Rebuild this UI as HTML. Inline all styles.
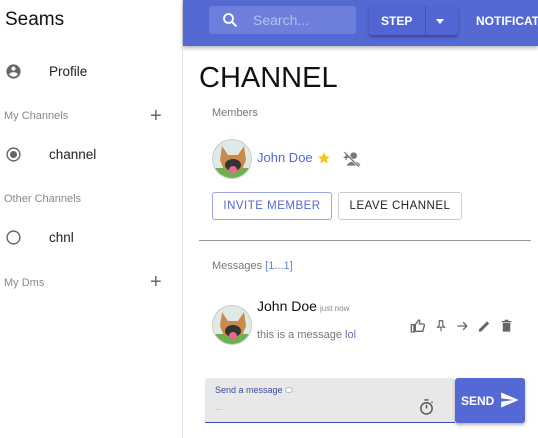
<!DOCTYPE html>
<html><head><style>
*{margin:0;padding:0;box-sizing:border-box}
body{width:538px;height:438px;overflow:hidden;font-family:"Liberation Sans",Arial,sans-serif;background:#fff;position:relative;color:#222}
.a{position:absolute}
.side{left:0;top:0;width:183px;height:438px;border-right:1px solid #e2e2e2}
.sub{font-size:11px;color:#888}
.it{font-size:13.5px;color:#222}
.hdr{left:183px;top:0;width:355px;height:46px;background:#5569d5;box-shadow:0 2px 4px rgba(0,0,0,.3)}
.av{width:40px;height:40px;border-radius:50%;overflow:hidden;border:1px solid #ccc;background:#dfe9e6}
.btn{height:28px;border:1px solid #ccc;border-radius:3px;font-size:11.5px;letter-spacing:.5px;display:flex;align-items:center;justify-content:center}
</style></head><body>
<div class="a side">
 <div class="a" style="left:5px;top:9px;font-size:19px;color:#111">Seams</div>
 <svg class="a" style="left:5px;top:63px" width="17" height="17" viewBox="0 0 24 24"><path fill="#666" d="M12 2a10 10 0 100 20 10 10 0 000-20zm0 3a3 3 0 110 6 3 3 0 010-6zm0 14.2a7.2 7.2 0 01-6-3.2c0-2 4-3.1 6-3.1s6 1.1 6 3.1a7.2 7.2 0 01-6 3.2z"/></svg>
 <div class="a it" style="left:49px;top:64px">Profile</div>
 <div class="a sub" style="left:4px;top:110px">My Channels</div>
 <div class="a" style="left:150px;top:105px;font-size:20px;color:#666;font-weight:300">+</div>
 <svg class="a" style="left:5px;top:146px" width="17" height="17" viewBox="0 0 24 24"><circle cx="12" cy="12" r="9" fill="none" stroke="#666" stroke-width="2"/><circle cx="12" cy="12" r="5" fill="#666"/></svg>
 <div class="a it" style="left:49px;top:147px">channel</div>
 <div class="a sub" style="left:4px;top:193px">Other Channels</div>
 <svg class="a" style="left:5px;top:229px" width="17" height="17" viewBox="0 0 24 24"><circle cx="12" cy="12" r="9" fill="none" stroke="#666" stroke-width="2"/></svg>
 <div class="a it" style="left:49px;top:230px">chnl</div>
 <div class="a sub" style="left:4px;top:277px">My Dms</div>
 <div class="a" style="left:150px;top:271px;font-size:20px;color:#666;font-weight:300">+</div>
</div>
<div class="a hdr">
 <div class="a" style="left:26px;top:6px;width:147px;height:28px;background:rgba(255,255,255,.15);border-radius:3px"></div>
 <svg class="a" style="left:38px;top:11px" width="18" height="18" viewBox="0 0 24 24"><circle cx="10" cy="10" r="6" fill="none" stroke="#fff" stroke-width="2.4"/><path d="M14.5 14.5l6 6" stroke="#fff" stroke-width="2.6"/></svg>
 <div class="a" style="left:70px;top:12px;font-size:14px;color:rgba(255,255,255,.5)">Search...</div>
 <div class="a" style="left:186px;top:6px;width:89px;height:29px;background:#5266d3;border-radius:3px;box-shadow:0 2px 3px rgba(0,0,0,.35)"></div>
 <div class="a" style="left:242px;top:6px;width:1px;height:29px;background:#3d4fb0"></div>
 <div class="a" style="left:198px;top:14px;font-size:12px;font-weight:bold;color:#fff">STEP</div>
 <div class="a" style="left:253px;top:19px;border:4px solid transparent;border-top:5px solid #fff"></div>
 <div class="a" style="left:293px;top:14px;font-size:12px;font-weight:bold;color:#fff;white-space:nowrap">NOTIFICAT</div>
</div>
<div class="a" style="left:199px;top:62px;font-size:29px;color:#111">CHANNEL</div>
<div class="a sub" style="left:212px;top:107px;color:#777">Members</div>
<div class="a av" style="left:212px;top:139px"><svg width="40" height="40" viewBox="0 0 40 40"><rect y="28" width="40" height="12" fill="#6ab04c"/><path d="M9 6l6 9h10l6-9 2 14-4 10H11L7 20z" fill="#c98a4b"/><ellipse cx="20" cy="25" rx="8" ry="6" fill="#333"/><ellipse cx="20" cy="30" rx="4" ry="4" fill="#e56b8a"/></svg></div>
<div class="a" style="left:257px;top:150px;font-size:13px;color:#5469d4">John Doe</div>
<svg class="a" style="left:317px;top:151px" width="14" height="14" viewBox="0 0 24 24"><path fill="#f5c518" d="M12 2l3 7 7 .6-5.4 4.7 1.7 7.2L12 17.8 5.7 21.5l1.7-7.2L2 9.6 9 9z"/></svg>
<svg class="a" style="left:342px;top:149px" width="20" height="20" viewBox="0 0 24 24"><circle cx="14" cy="8" r="4" fill="#777"/><path d="M6 20c0-3 5-5 8-5s8 2 8 5z" fill="#777"/><path d="M3 4l17 17" stroke="#fff" stroke-width="3"/><path d="M3 4l17 17M2 10h6M5 7v6" stroke="#777" stroke-width="1.6"/></svg>
<div class="a btn" style="left:212px;top:192px;width:120px;border-color:#9aa6e8;color:#5469d4">INVITE MEMBER</div>
<div class="a btn" style="left:338px;top:192px;width:124px;color:#222">LEAVE CHANNEL</div>
<div class="a" style="left:199px;top:240px;width:332px;height:1px;background:#999"></div>
<div class="a sub" style="left:212px;top:260px;color:#777">Messages <span style="color:#5a8ad0">[1...1]</span></div>
<div class="a av" style="left:212px;top:305px"><svg width="40" height="40" viewBox="0 0 40 40"><rect y="28" width="40" height="12" fill="#6ab04c"/><path d="M9 6l6 9h10l6-9 2 14-4 10H11L7 20z" fill="#c98a4b"/><ellipse cx="20" cy="25" rx="8" ry="6" fill="#333"/><ellipse cx="20" cy="30" rx="4" ry="4" fill="#e56b8a"/></svg></div>
<div class="a" style="left:257px;top:298px;font-size:14px;color:#111">John Doe</div>
<div class="a" style="left:320px;top:304px;font-size:8px;color:#888">just now</div>
<div class="a" style="left:257px;top:329px;font-size:11px;color:#777">this is a message <span style="color:#6a74b8">lol</span></div>
<svg class="a" style="left:410px;top:318px" width="16" height="16" viewBox="0 0 24 24"><path d="M2 10h4v11H2zM8 10l5-7c2 0 2 2 1.5 3L14 9h6c1 0 2 1 1.5 2.5L19 20H8z" fill="none" stroke="#666" stroke-width="2"/></svg>
<svg class="a" style="left:434px;top:318px" width="14" height="16" viewBox="0 0 24 24"><path d="M8 3h8M9 3v8l-3 3h12l-3-3V3M12 14v7" fill="none" stroke="#666" stroke-width="2"/></svg>
<svg class="a" style="left:455px;top:318px" width="15" height="16" viewBox="0 0 24 24"><path d="M4 12h15M13 6l6 6-6 6" fill="none" stroke="#666" stroke-width="2"/></svg>
<svg class="a" style="left:477px;top:318px" width="15" height="16" viewBox="0 0 24 24"><path d="M3 21v-3.5L16 4.5l3.5 3.5L6.5 21z" fill="#666"/></svg>
<svg class="a" style="left:499px;top:318px" width="15" height="16" viewBox="0 0 24 24"><path d="M6 7h12v14H6zM4 4h16v2H4zM9 2h6v2H9z" fill="#666"/></svg>
<div class="a" style="left:205px;top:378px;width:250px;height:45px;background:#e8e8e8;border-radius:3px 3px 0 0;border-bottom:1px solid #3a4fb0"></div>
<div class="a" style="left:215px;top:385px;font-size:9px;color:#3a4a9a">Send a message <span style="display:inline-block;width:8px;height:6px;border:1px solid #bbb;border-radius:50%;background:#fff"></span></div>
<div class="a" style="left:215px;top:402px;font-size:9px;color:#aaa">...</div>
<svg class="a" style="left:418px;top:398px" width="17" height="18" viewBox="0 0 24 24"><circle cx="12" cy="14" r="8" fill="none" stroke="#555" stroke-width="2"/><path d="M9 2h6M12 14V9M19 6l1.5-1.5" stroke="#555" stroke-width="2"/></svg>
<div class="a" style="left:455px;top:378px;width:70px;height:45px;background:#5569d5;border-radius:3px;box-shadow:0 2px 3px rgba(0,0,0,.3)"></div>
<div class="a" style="left:461px;top:394px;font-size:12px;font-weight:bold;color:#fff">SEND</div>
<svg class="a" style="left:499px;top:390px" width="21" height="20" viewBox="0 0 24 24"><path d="M2 21l21-9L2 3v7l15 2-15 2z" fill="#fff"/></svg>
</body></html>
